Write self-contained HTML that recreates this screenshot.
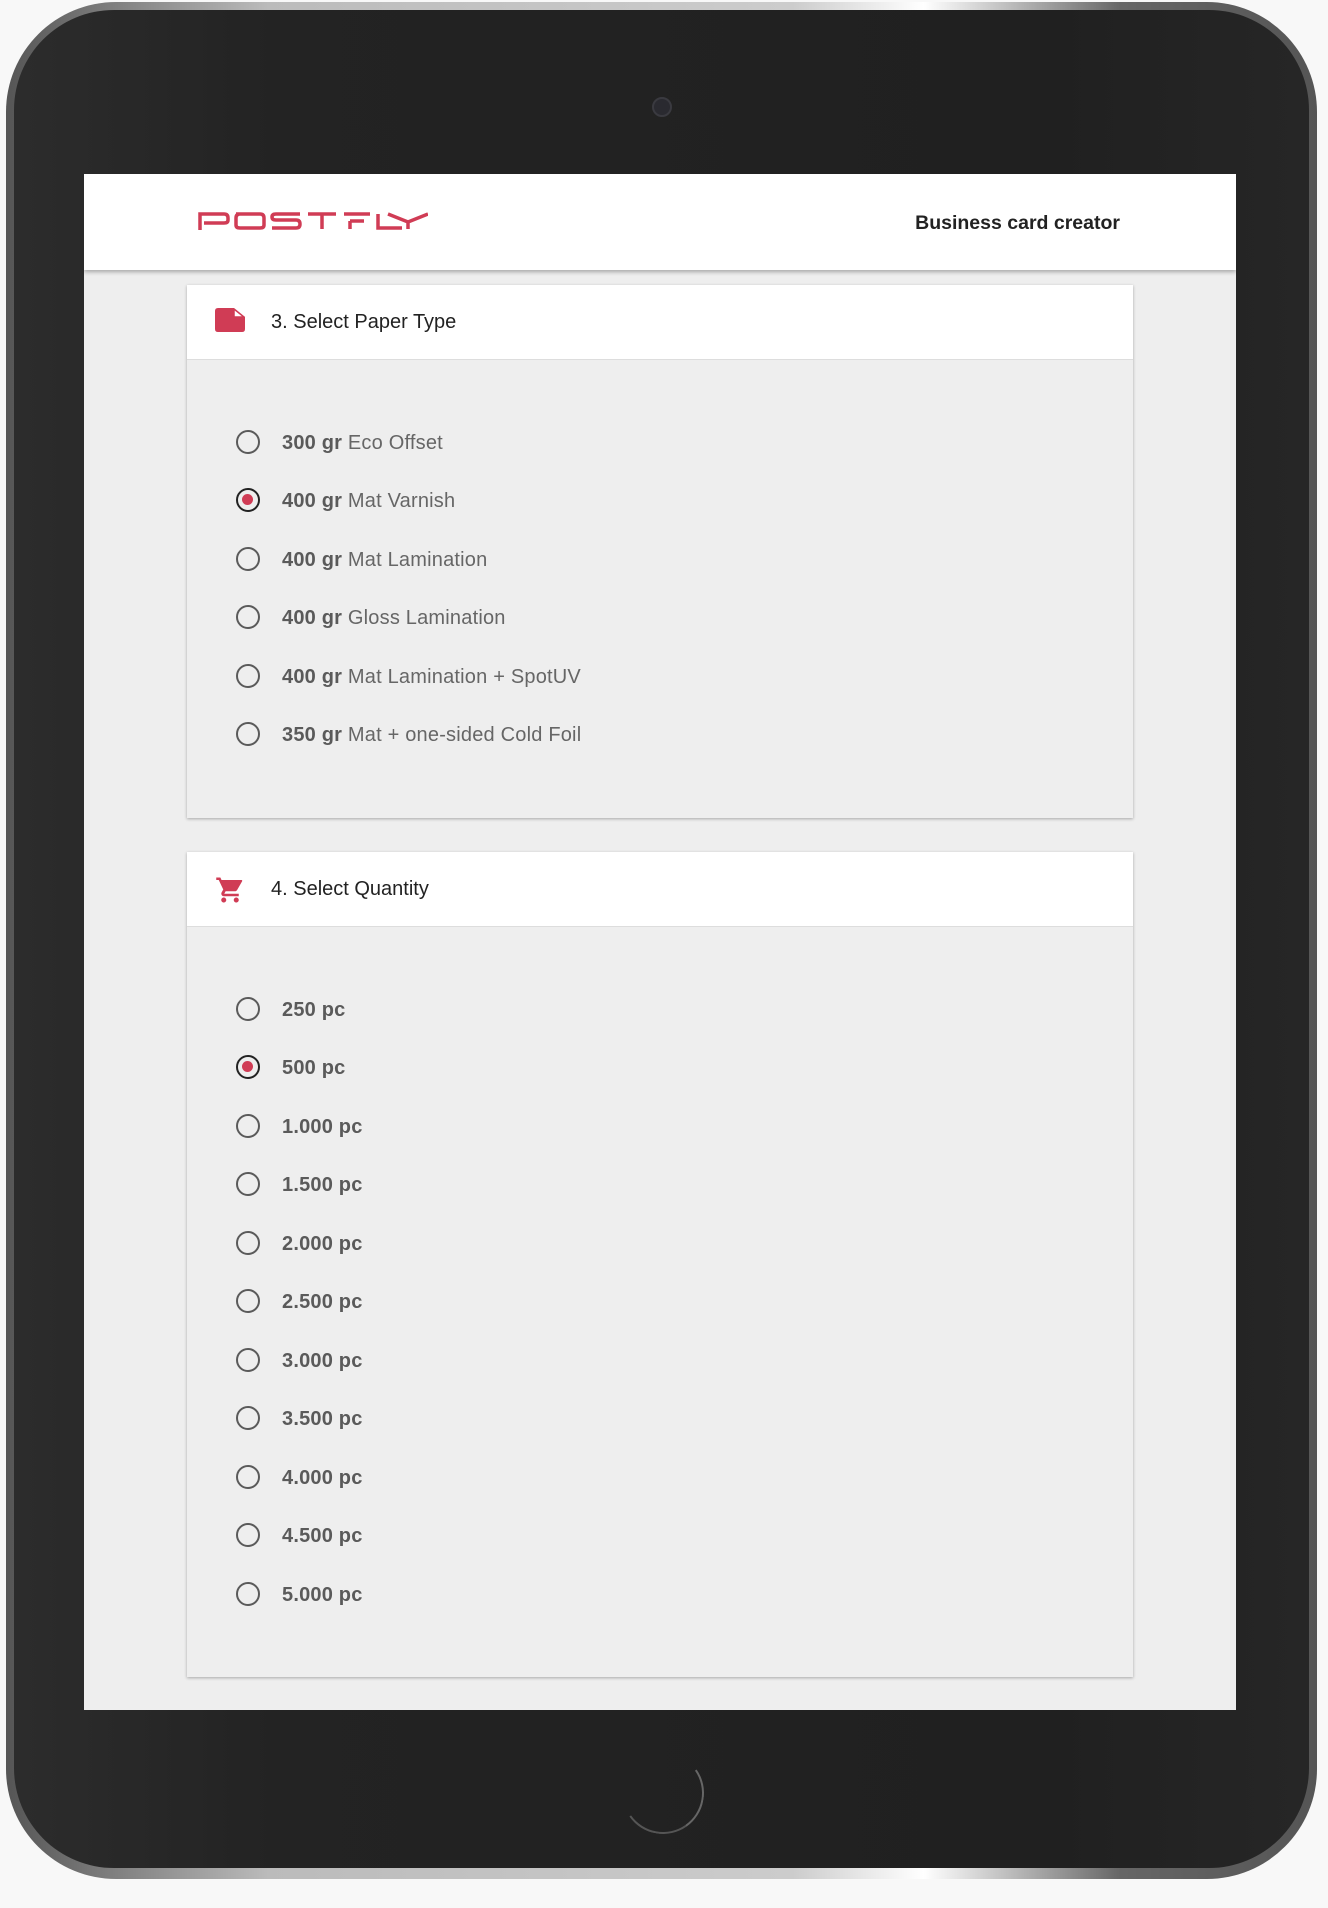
<!DOCTYPE html>
<html><head><meta charset="utf-8"><style>
*{margin:0;padding:0;box-sizing:border-box}
body{width:1328px;height:1908px;background:#f8f8f8;position:relative;overflow:hidden;font-family:"Liberation Sans",Arial,sans-serif}
.dev{position:absolute;left:6px;top:2px;width:1311px;height:1877px;border-radius:110px;background:linear-gradient(90deg,#555,#bbb 20%,#ccc 60%,#fff 70%,#666 85%,#555);}
.dev2{position:absolute;left:14px;top:10px;width:1295px;height:1858px;border-radius:100px;background:linear-gradient(90deg,#2c2c2c,#232323 20%,#202020 80%,#262626);}
.screen{position:absolute;left:84px;top:174px;width:1152px;height:1536px;background:#eee;overflow:hidden}
.hdr{position:absolute;left:0;top:0;width:1152px;height:96px;background:#fff;box-shadow:0 2px 4px rgba(0,0,0,.3)}
.title{position:absolute;right:116px;top:38px;font-size:19.5px;font-weight:bold;color:#222}
.card{position:absolute;left:103px;width:946px;background:#eee;box-shadow:0 1px 3px rgba(0,0,0,.3)}
.ch{height:75px;background:#fff;border-bottom:1px solid #ddd;position:relative}
.ch span{position:absolute;left:84px;top:26px;font-size:20px;color:#222}
.ch svg{position:absolute;left:28px;top:23px}
.opt{position:absolute;left:0;height:30px;width:600px}
.opt i{position:absolute;left:49px;top:3px;width:24px;height:24px;border:2.5px solid #5a5a5a;border-radius:50%}
.opt i.on{border-color:#222}
.opt i.on:after{content:"";position:absolute;left:4px;top:4px;width:11px;height:11px;border-radius:50%;background:#d03c55}
.opt span{position:absolute;left:95px;top:5px;font-size:20px;color:#666;letter-spacing:0.2px}
.opt b{font-weight:bold;color:#5a5a5a}
</style></head><body>
<div class="dev"></div><div class="dev2"></div>
<div style="position:absolute;left:652px;top:97px;width:20px;height:20px;border-radius:50%;background:#2a2a30;border:2px solid #3a3a40"></div>
<div style="position:absolute;left:622px;top:1752px;width:82px;height:82px;border-radius:50%;border:2px solid transparent;border-right-color:#666;border-bottom-color:#555;transform:rotate(10deg)"></div>
<div class="screen">
<div class="hdr">
<svg style="position:absolute;left:114px;top:38px" width="230" height="18" viewBox="0 0 230 18" fill="none" stroke="#d03c55" stroke-width="3.5">
<path d="M2 18V2H26Q30 2 30 6V8Q30 11 26 11H6"/>
<path d="M38 2H62Q66 2 66 6V13Q66 16 62 16H42Q38 16 38 13V6Q38 2 42 2Z"/>
<path d="M102 2H78Q74 2 74 5Q74 8 78 8H98Q102 8 102 12Q102 16 98 16H74"/>
<path d="M110 2H138M124 2V17"/>
<path d="M146 2H172M152 9H166M152 9V17"/>
<path d="M180 2V16H204"/>
<path d="M190 2L210 10L230 2M210 10V17"/>
</svg>
<div class="title">Business card creator</div>
</div>
<div class="card" style="top:111px;height:533px">
<div class="ch"><svg width="30" height="24" viewBox="0 0 30 24"><path d="M3 0H19L30 9V21Q30 24 27 24H3Q0 24 0 21V3Q0 0 3 0Z" fill="#d03c55"/><path d="M19 0V9H30Z" fill="#fff"/><path d="M19 1L29 9H19Z" fill="#fff" stroke="#d03c55" stroke-width="1.5"/></svg><span>3. Select Paper Type</span></div>
<div class="opt" style="top:142px"><i></i><span><b>300 gr</b> Eco Offset</span></div>
<div class="opt" style="top:200px"><i class="on"></i><span><b>400 gr</b> Mat Varnish</span></div>
<div class="opt" style="top:259px"><i></i><span><b>400 gr</b> Mat Lamination</span></div>
<div class="opt" style="top:317px"><i></i><span><b>400 gr</b> Gloss Lamination</span></div>
<div class="opt" style="top:376px"><i></i><span><b>400 gr</b> Mat Lamination + SpotUV</span></div>
<div class="opt" style="top:434px"><i></i><span><b>350 gr</b> Mat + one-sided Cold Foil</span></div>
</div>
<div class="card" style="top:678px;height:825px">
<div class="ch"><svg width="30" height="30" viewBox="0 0 24 24"><path fill="#d03c55" d="M7 18c-1.1 0-2 .9-2 2s.9 2 2 2 2-.9 2-2-.9-2-2-2zM1 2v2h2l3.6 7.6-1.35 2.4C4.6 15.4 5.6 17 7 17h12v-2H7.4l1.1-2h7.45c.75 0 1.41-.41 1.750-1.03L21.7 4.96C22 4.3 21.5 4 21 4H5.2l-.9-2H1zm16 16c-1.1 0-2 .9-2 2s.9 2 2 2 2-.9 2-2-.9-2-2-2z"/></svg><span>4. Select Quantity</span></div>
<div class="opt" style="top:142px"><i></i><span><b>250 pc</b></span></div>
<div class="opt" style="top:200px"><i class="on"></i><span><b>500 pc</b></span></div>
<div class="opt" style="top:259px"><i></i><span><b>1.000 pc</b></span></div>
<div class="opt" style="top:317px"><i></i><span><b>1.500 pc</b></span></div>
<div class="opt" style="top:376px"><i></i><span><b>2.000 pc</b></span></div>
<div class="opt" style="top:434px"><i></i><span><b>2.500 pc</b></span></div>
<div class="opt" style="top:493px"><i></i><span><b>3.000 pc</b></span></div>
<div class="opt" style="top:551px"><i></i><span><b>3.500 pc</b></span></div>
<div class="opt" style="top:610px"><i></i><span><b>4.000 pc</b></span></div>
<div class="opt" style="top:668px"><i></i><span><b>4.500 pc</b></span></div>
<div class="opt" style="top:727px"><i></i><span><b>5.000 pc</b></span></div>
</div>
</div>
</body></html>
